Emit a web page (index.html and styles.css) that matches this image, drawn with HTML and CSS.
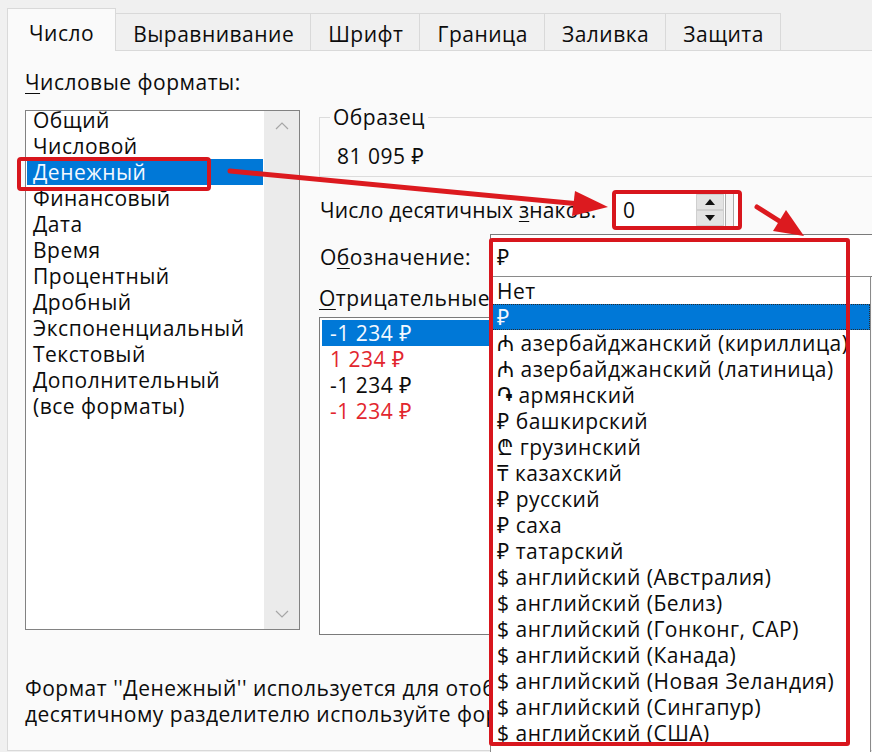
FILE: index.html
```html
<!DOCTYPE html>
<html lang="ru">
<head>
<meta charset="utf-8">
<title>Формат ячеек</title>
<link rel="stylesheet" href="styles.css">
</head>
<body>
<div class="dialog">
  <div class="tabs">
    <div class="tab active">Число</div>
    <div class="tab">Выравнивание</div>
    <div class="tab">Шрифт</div>
    <div class="tab">Граница</div>
    <div class="tab">Заливка</div>
    <div class="tab">Защита</div>
  </div>
  <div class="panel">
    <div class="columns">
      <div class="left">
        <div class="label"><u>Ч</u>исловые форматы:</div>
        <div class="listbox formats">
          <ul class="items">
            <li>Общий</li>
            <li>Числовой</li>
            <li class="selected">Денежный</li>
            <li>Финансовый</li>
            <li>Дата</li>
            <li>Время</li>
            <li>Процентный</li>
            <li>Дробный</li>
            <li>Экспоненциальный</li>
            <li>Текстовый</li>
            <li>Дополнительный</li>
            <li>(все форматы)</li>
          </ul>
          <div class="scrollbar">
            <svg class="chev" width="14" height="9" viewBox="0 0 14 9"><path d="M1 8 L7 2 L13 8" fill="none" stroke="#a6a6a6" stroke-width="1.2"/></svg>
            <svg class="chev" width="14" height="9" viewBox="0 0 14 9"><path d="M1 1 L7 7 L13 1" fill="none" stroke="#a6a6a6" stroke-width="1.2"/></svg>
          </div>
        </div>
      </div>
      <div class="right">
        <fieldset class="sample">
          <legend>Образец</legend>
          <div class="sample-value">81 095 ₽</div>
        </fieldset>
        <div class="row decimals">
          <span class="row-label">Число десятичных <u>з</u>наков:</span>
          <div class="spin">
            <span class="spin-value">0</span>
            <div class="spin-buttons">
              <div class="spin-btn"><svg width="12" height="8" viewBox="0 0 12 8"><path d="M6 1 L11 7 L1 7 Z" fill="#111"/></svg></div>
              <div class="spin-btn"><svg width="12" height="8" viewBox="0 0 12 8"><path d="M1 1 L11 1 L6 7 Z" fill="#111"/></svg></div>
            </div>
            <div class="spin-edge"></div>
          </div>
        </div>
        <div class="row symbol">
          <span class="row-label">О<u>б</u>означение:</span>
          <div class="combo">
            <span class="combo-value">₽</span>
            <ul class="dropdown">
              <li>Нет</li>
              <li class="selected">₽</li>
              <li>₼ азербайджанский (кириллица)</li>
              <li>₼ азербайджанский (латиница)</li>
              <li>֏ армянский</li>
              <li>₽ башкирский</li>
              <li>₾ грузинский</li>
              <li>₸ казахский</li>
              <li>₽ русский</li>
              <li>₽ саха</li>
              <li>₽ татарский</li>
              <li>$ английский (Австралия)</li>
              <li>$ английский (Белиз)</li>
              <li>$ английский (Гонконг, САР)</li>
              <li>$ английский (Канада)</li>
              <li>$ английский (Новая Зеландия)</li>
              <li>$ английский (Сингапур)</li>
              <li>$ английский (США)</li>
            </ul>
          </div>
        </div>
        <div class="label neg-label"><u>О</u>трицательные числа:</div>
        <ul class="listbox negatives">
          <li class="selected">-1 234 ₽</li>
          <li class="red">1 234 ₽</li>
          <li>-1 234 ₽</li>
          <li class="red">-1 234 ₽</li>
        </ul>
      </div>
    </div>
    <p class="desc">Формат ''Денежный'' используется для отображения денежных величин. Для выравнивания значений по<br>десятичному разделителю используйте формат ''Финансовый''.</p>
  </div>
</div>

<div class="annot annot-formats"></div>
<div class="annot annot-spin"></div>
<div class="annot annot-dropdown"></div>
<svg class="arrows" width="872" height="752" viewBox="0 0 872 752">
  <line x1="230" y1="171" x2="580" y2="204" stroke="#dc1a1f" stroke-width="5" stroke-linecap="round"/>
  <polygon points="608,207 572,216 575,191" fill="#dc1a1f"/>
  <line x1="757" y1="207" x2="784" y2="224" stroke="#dc1a1f" stroke-width="5" stroke-linecap="round"/>
  <polygon points="804,236 773,231 786,210" fill="#dc1a1f"/>
</svg>
</body>
</html>
```
FILE: styles.css
```css
* { box-sizing: border-box; }
html, body { margin: 0; padding: 0; }
body {
  width: 872px;
  height: 752px;
  overflow: hidden;
  position: relative;
  background: #f0f0f0;
  font-family: "Open Sans", "Noto Sans", "DejaVu Sans", sans-serif;
  font-size: 21px;
  line-height: 26px;
  letter-spacing: 0.5px;
  color: #0c0c0c;
}
ul { list-style: none; margin: 0; padding: 0; }
u { text-decoration-thickness: 1px; text-underline-offset: 3px; }

.dialog { padding: 8px 0 0 7px; width: 1000px; }

.tabs { display: flex; align-items: flex-end; height: 42px; }
.tab {
  height: 37px;
  padding: 4px 16px 0 17px;
  display: flex;
  align-items: center;
  background: #f0f0f0;
  border: 1px solid #d9d9d9;
  border-left: none;
  border-bottom: none;
}
.tab.active {
  height: 43px;
  margin-bottom: -1px;
  padding: 6px 21px 0 21px;
  background: #fafafa;
  border-left: 1px solid #d9d9d9;
  position: relative;
  z-index: 1;
}

.panel {
  height: 701px;
  background: #fafafa;
  border: 1px solid #d9d9d9;
  padding: 18px 0 0 17px;
}
.columns { display: flex; gap: 19px; }
.left { width: 275px; }
.label { height: 26px; white-space: nowrap; }

.listbox { background: #fff; border: 1px solid #828282; }
.formats { margin-top: 15px; height: 520px; display: flex; }
.formats .items { flex: 1; margin-top: -4px; }
.formats li { margin: 0 1px; padding-left: 6px; height: 26px; white-space: nowrap; }
li.selected { background: #0078d7; color: #f4f8ff; }

.scrollbar {
  width: 35px;
  background: #ebebeb;
  display: flex;
  flex-direction: column;
  justify-content: space-between;
  align-items: center;
  padding: 10px 0 10px;
}

.right { width: 560px; }
.sample {
  margin: 35px 0 0;
  padding: 13px 0 7px 10px;
  border: 1px solid #dcdcdc;
}
.sample legend { padding: 0 3px; }
.sample-value { margin-left: 7px; height: 26px; }

.row { display: flex; align-items: center; }
.row-label { padding-left: 1px; flex: none; white-space: nowrap; }
.decimals { margin-top: 13px; height: 40px; }
.decimals .row-label { width: 293px; letter-spacing: 0.2px; }

.spin {
  width: 129px;
  height: 40px;
  padding: 4px;
  display: flex;
  background: #fff;
  border-radius: 5px;
}
.spin-value { flex: 1; padding-left: 7px; line-height: 32px; }
.spin-buttons { width: 28px; display: flex; flex-direction: column; }
.spin-btn {
  flex: 1;
  background: #e3e3e3;
  border: 1px solid #cfcfcf;
  display: flex;
  align-items: center;
  justify-content: center;
}
.spin-edge {
  width: 9px;
  border-left: 1px solid #aaa;
  border-right: 1px solid #aaa;
  margin: 0 3px 0 1px;
  background: #f4f4f4;
}

.symbol { margin-top: 4px; height: 43px; padding-top: 2px; }
.symbol .row-label { width: 171px; }
.combo {
  flex: none;
  width: 400px;
  height: 43px;
  margin-top: -2px;
  background: #fff;
  border: 1px solid #7a7a7a;
  border-right: none;
  padding: 2px 0 0 6px;
  display: flex;
  align-items: center;
  position: relative;
}
.dropdown {
  position: absolute;
  top: 41px;
  left: -1px;
  width: 381px;
  height: 480px;
  background: #fff;
  border: 1px solid #8a8a8a;
  padding: 1px 0 0;
  z-index: 5;
}
.dropdown li { padding-left: 6px; height: 26px; white-space: nowrap; }
.dropdown li.selected { outline: 1px dotted #2b2b2b; outline-offset: -1px; }

.neg-label { margin-top: 8px; }
.negatives {
  margin-top: 6px;
  width: 240px;
  height: 318px;
  padding: 2px 0;
  border-color: #7a7a7a;
}
.negatives li { margin: 0 2px; padding-left: 8px; height: 26px; }
.negatives li.red { color: #e2262e; }

.desc { margin: 40px 0 0; white-space: nowrap; }

.annot {
  position: absolute;
  border: 4px solid #d8161d;
  border-radius: 4px;
  z-index: 10;
}
.annot-formats { left: 17px; top: 157px; width: 194px; height: 34px; }
.annot-spin { left: 612px; top: 190px; width: 130px; height: 40px; }
.annot-dropdown { left: 489px; top: 238px; width: 361px; height: 508px; border-radius: 3px; }
.arrows { position: absolute; left: 0; top: 0; z-index: 11; }
```
